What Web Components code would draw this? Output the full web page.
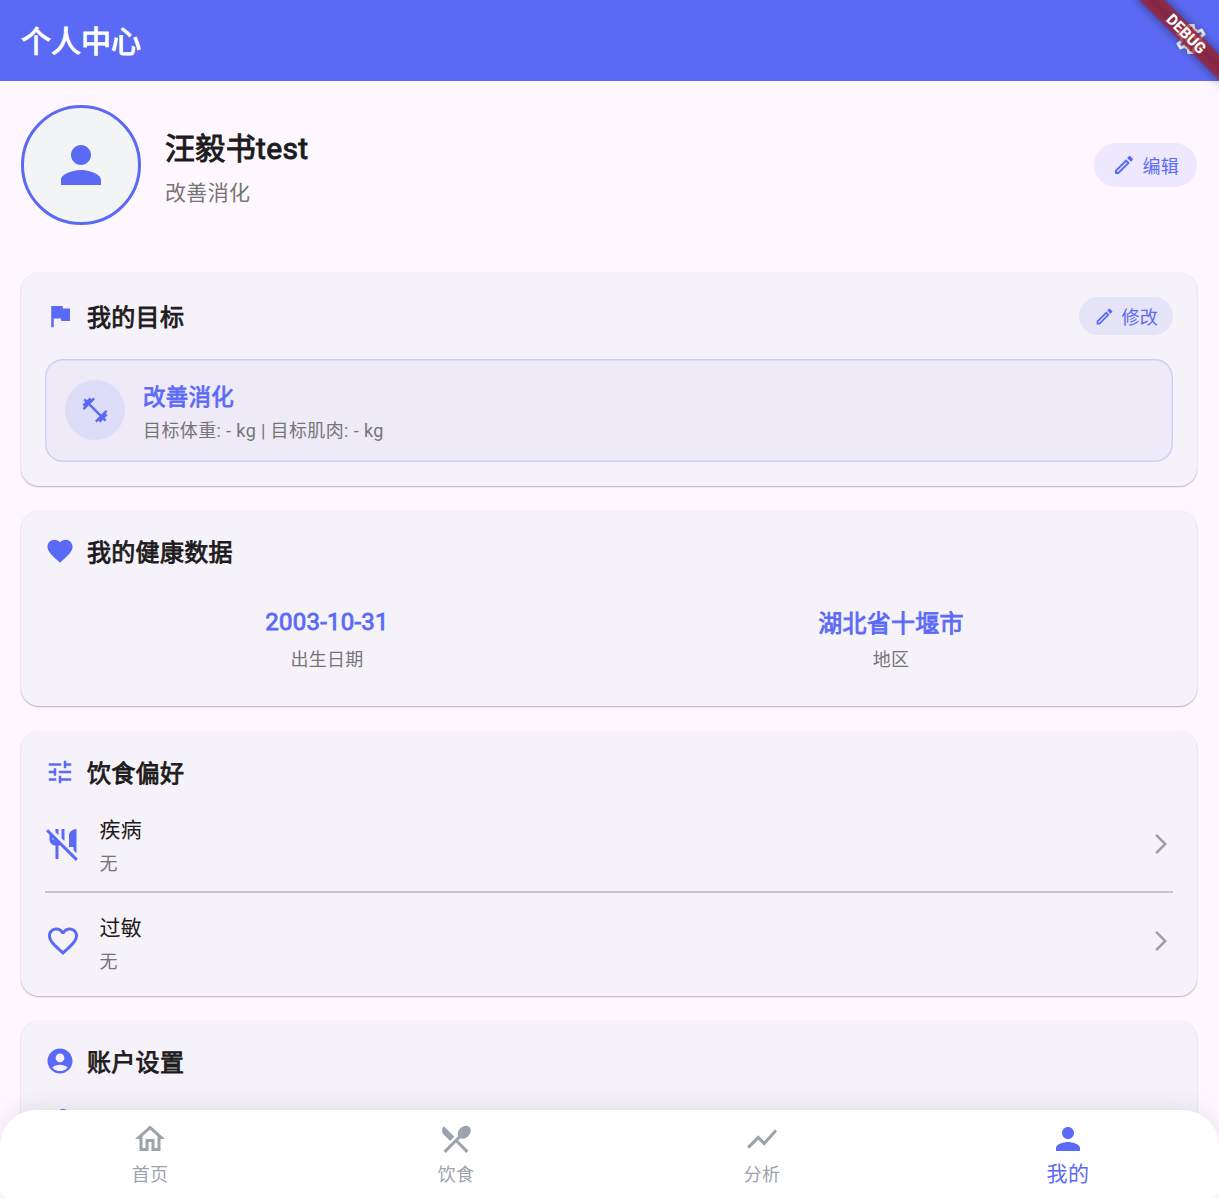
<!DOCTYPE html>
<html lang="zh-CN">
<head>
<meta charset="utf-8">
<title>个人中心</title>
<style>
html,body{margin:0;padding:0;height:100%;overflow:hidden;background:#fef7ff}
body{font-family:Roboto,"Noto Sans CJK SC",sans-serif;color:#1d1b20;--primary:#5b6af5}
</style>
</head>
<body>
<profile-app></profile-app>
<script>
const ICONS = {
  person:'M12 12c2.21 0 4-1.79 4-4s-1.79-4-4-4-4 1.79-4 4 1.79 4 4 4zm0 2c-2.67 0-8 1.34-8 4v2h16v-2c0-2.66-5.33-4-8-4z',
  flag:'M14.4 6L14 4H5v17h2v-7h5.6l.4 2h7V6z',
  edit:'M14.06 9.02l.92.92L5.92 19H5v-.92l9.06-9.06M17.66 3c-.25 0-.51.1-.7.29l-1.83 1.83 3.75 3.75 1.83-1.83c.39-.39.39-1.02 0-1.41l-2.34-2.34c-.2-.2-.45-.29-.71-.29zm-3.6 3.19L3 17.25V21h3.75L17.81 9.94l-3.75-3.75z',
  fitness:'M20.57 14.86L22 13.43 20.57 12 17 15.57 8.43 7 12 3.43 10.57 2 9.14 3.43 7.71 2 5.57 4.14 4.14 2.71 2.71 4.14l1.43 1.43L2 7.71l1.43 1.43L2 10.57 3.43 12 7 8.43 15.57 17 12 20.57 13.43 22l1.43-1.43L16.29 22l2.14-2.14 1.43 1.43 1.43-1.43-1.43-1.43L22 16.29z',
  heart:'M12 21.35l-1.45-1.32C5.4 15.36 2 12.28 2 8.5 2 5.42 4.42 3 7.5 3c1.74 0 3.41.81 4.5 2.09C13.09 3.81 14.76 3 16.5 3 19.58 3 22 5.42 22 8.5c0 3.78-3.4 6.86-8.55 11.54L12 21.35z',
  tune:'M3 17v2h6v-2H3zM3 5v2h10V5H3zm10 16v-2h8v-2h-8v-2h-2v6h2zM7 9v2H3v2h4v2h2V9H7zm14 4v-2H11v2h10zm-6-4h2V7h4V5h-4V3h-2v6z',
  nomeals:'M16 14V6c0-1.76 2.24-4 5-4v16.17l-2-2V14h-3zM20.49 23.31L10.02 12.85C9.69 12.94 9.36 13 9 13v9H7v-9c-2.21 0-4-1.79-4-4V5.83L.69 3.51 2.1 2.1l19.8 19.8-1.41 1.41zM6.17 9L5 7.83V9h1.17zM9 2H7v2.17l2 2V2zM13 9V2h-2v6.17l1.85 1.85c.09-.33.15-.66.15-1.02z',
  heartline:'M16.5 3c-1.74 0-3.41.81-4.5 2.09C10.91 3.81 9.24 3 7.5 3 4.42 3 2 5.42 2 8.5c0 3.78 3.4 6.86 8.55 11.54L12 21.35l1.45-1.32C18.6 15.36 22 12.28 22 8.5 22 5.42 19.58 3 16.5 3zm-4.4 15.55l-.1.1-.1-.1C7.14 14.24 4 11.39 4 8.5 4 6.5 5.5 5 7.5 5c1.54 0 3.04.99 3.57 2.36h1.87C13.46 5.99 14.96 5 16.5 5c2 0 3.5 1.5 3.5 3.5 0 2.89-3.14 5.74-7.9 10.05z',
  chevron:'M6.23 20.23L8 22l10-10L8 2 6.23 3.77 14.46 12z',
  account:'M12 2C6.48 2 2 6.48 2 12s4.48 10 10 10 10-4.48 10-10S17.52 2 12 2zm0 4c1.93 0 3.5 1.57 3.5 3.5S13.93 13 12 13s-3.5-1.57-3.5-3.5S10.07 6 12 6zm0 14c-2.03 0-4.43-.82-6.14-2.88C7.55 15.8 9.68 15 12 15s4.45.8 6.14 2.12C16.43 19.18 14.03 20 12 20z',
  home:'M12 5.69l5 4.5V18h-2v-6H9v6H7v-7.81l5-4.5M12 3L2 12h3v8h6v-6h2v6h6v-8h3L12 3z',
  meal:'M8.1 13.34l2.83-2.83L3.91 3.5c-1.56 1.56-1.56 4.09 0 5.66l4.19 4.18zm6.78-1.81c1.53.71 3.68.21 5.27-1.38 1.91-1.91 2.28-4.65.81-6.12-1.46-1.46-4.2-1.1-6.12.81-1.59 1.59-2.09 3.74-1.38 5.27L3.7 19.87l1.41 1.41L12 14.41l6.88 6.88 1.41-1.41L13.41 13l1.47-1.47z',
  chart:'M3.5 18.49l6-6.01 4 4L22 6.92l-1.41-1.41-7.09 7.97-4-4L2 16.99z',
  settings:'M19.43 12.98c.04-.32.07-.64.07-.98 0-.34-.03-.66-.07-.98l2.11-1.65c.19-.15.24-.42.12-.64l-2-3.46c-.09-.16-.26-.25-.44-.25-.06 0-.12.01-.17.03l-2.49 1c-.52-.4-1.08-.73-1.69-.98l-.38-2.65C14.46 2.18 14.25 2 14 2h-4c-.25 0-.46.18-.49.42l-.38 2.65c-.61.25-1.17.59-1.69.98l-2.49-1c-.06-.02-.12-.03-.18-.03-.17 0-.34.09-.43.25l-2 3.46c-.13.22-.07.49.12.64l2.11 1.65c-.04.32-.07.65-.07.98 0 .33.03.66.07.98l-2.11 1.65c-.19.15-.24.42-.12.64l2 3.46c.09.16.26.25.44.25.06 0 .12-.01.17-.03l2.49-1c.52.4 1.08.73 1.69.98l.38 2.65c.03.24.24.42.49.42h4c.25 0 .46-.18.49-.42l.38-2.65c.61-.25 1.17-.59 1.69-.98l2.49 1c.06.02.12.03.18.03.17 0 .34-.09.43-.25l2-3.46c.12-.22.07-.49-.12-.64l-2.11-1.65zm-1.98-1.71c.04.31.05.52.05.73 0 .21-.02.43-.05.73l-.14 1.13.89.7 1.08.84-.7 1.21-1.27-.51-1.04-.42-.9.68c-.43.32-.84.56-1.25.73l-1.06.43-.16 1.13-.2 1.35h-1.4l-.19-1.35-.16-1.13-1.06-.43c-.43-.18-.83-.41-1.23-.71l-.91-.7-1.06.43-1.27.51-.7-1.21 1.08-.84.89-.7-.14-1.13c-.03-.31-.05-.54-.05-.74s.02-.43.05-.73l.14-1.13-.89-.7-1.08-.84.7-1.21 1.27.51 1.04.42.9-.68c.43-.32.84-.56 1.25-.73l1.06-.43.16-1.13.2-1.35h1.39l.19 1.35.16 1.13 1.06.43c.43.18.83.41 1.23.71l.91.7 1.06-.43 1.27-.51.7 1.21-1.07.85-.89.7.14 1.13zM12 8c-2.21 0-4 1.79-4 4s1.79 4 4 4 4-1.79 4-4-1.79-4-4-4zm0 6c-1.1 0-2-.9-2-2s.9-2 2-2 2 .9 2 2-.9 2-2 2z'
};

function define(name, html) {
  customElements.define(name, class extends HTMLElement {
    connectedCallback() {
      if (this.shadowRoot) return;
      const root = this.attachShadow({mode:'open'});
      root.innerHTML = typeof html === 'function' ? html(this) : html;
    }
  });
}

define('m-icon', el => `<style>
:host{display:block;flex:none;width:${el.getAttribute('size')}px;height:${el.getAttribute('size')}px}
svg{display:block;width:100%;height:100%;fill:currentColor}
</style><svg viewBox="0 0 24 24" aria-hidden="true"><path d="${ICONS[el.getAttribute('name')]}"/></svg>`);

define('app-header', `<style>
:host{display:flex;flex:none;box-sizing:border-box;height:81px;padding:0 10px 0 21px;align-items:center;justify-content:space-between;background:var(--primary);color:#fff}
h1{margin:2px 0 0;font-size:30px;line-height:40px;font-weight:400;-webkit-text-stroke:1.05px currentColor}
m-icon{margin-bottom:3px}
</style><h1><slot></slot></h1><m-icon name="settings" size="36"></m-icon>`);

define('debug-banner', `<style>
:host{position:absolute;right:0;top:0;width:110px;height:110px;overflow:hidden;pointer-events:none}
.band{position:absolute;left:16.5px;top:24.5px;width:120px;height:18px;transform:rotate(45deg)}
.shade,.fill{position:absolute;inset:0}
.shade{background:rgba(0,0,0,.5);filter:blur(5.5px)}
.fill{background:rgba(183,28,28,.627);color:#fff;font-size:15.3px;line-height:18px;font-weight:800;text-align:center}
</style><div class="band"><div class="shade"></div><div class="fill">DEBUG</div></div>`);

define('pill-button', el => {
  const small = el.hasAttribute('small');
  return `<style>
:host{display:flex;flex:none;box-sizing:border-box;align-items:center;color:var(--primary);font-size:18px;line-height:24px;letter-spacing:.2px;
background:rgba(91,106,245,.1);
height:${small ? 37.5 : 43.5}px;border-radius:22px;padding:${small ? '0 15px' : '0 18px'};gap:7px}
span{padding-top:3px}
</style><m-icon name="edit" size="${small ? 21 : 24}"></m-icon><span><slot></slot></span>`;
});

define('profile-summary', `<style>
:host{display:flex;flex:none;align-items:center;height:120px;padding:24px 0 48px}
.avatar{box-sizing:border-box;width:120px;height:120px;border:3px solid var(--primary);border-radius:50%;background:#f3f4f6;color:var(--primary);display:flex;align-items:center;justify-content:center}
.who{flex:1;margin-left:24px;padding-top:5px}
.name{font-size:30px;line-height:42px;font-weight:400;-webkit-text-stroke:1px currentColor;letter-spacing:.35px}
.goal{font-size:21px;line-height:30px;letter-spacing:.37px;color:#757575;margin-top:8px}
</style><div class="avatar"><m-icon name="person" size="60"></m-icon></div>
<div class="who"><div class="name"><slot name="name"></slot></div><div class="goal"><slot name="goal"></slot></div></div>
<pill-button>编辑</pill-button>`);

define('section-card', el => `<style>
:host{display:block;flex:none;box-sizing:border-box;padding:24px;border-radius:18px;background:#f6f2f9;box-shadow:0 1px 1.5px rgba(0,0,0,.27),0 0 2px rgba(0,0,0,.06)}
header{display:flex;align-items:center;height:var(--head,32px);gap:12px}
m-icon{color:var(--primary)}
h2{flex:1;margin:0;padding-top:4px;font-size:24px;line-height:34px;font-weight:400;-webkit-text-stroke:.85px currentColor;letter-spacing:.3px}
</style><header><m-icon name="${el.getAttribute('icon')}" size="30"></m-icon><h2>${el.getAttribute('heading')}</h2><slot name="action"></slot></header><slot></slot>`);

define('goal-box', `<style>
:host{display:flex;box-sizing:border-box;height:102.5px;align-items:center;gap:18.5px;padding:0 19.5px;box-shadow:inset 0 0 0 1.5px rgba(91,106,245,.2);border-radius:18px;background:rgba(91,106,245,.05)}
.badge{display:flex;align-items:center;justify-content:center;width:60px;height:60px;border-radius:50%;background:rgba(91,106,245,.1);color:var(--primary)}
.txt{padding-top:4px}
.t{font-size:22.5px;line-height:32px;font-weight:400;-webkit-text-stroke:.8px currentColor;letter-spacing:.25px;color:var(--primary)}
.s{font-size:18px;line-height:26px;letter-spacing:.38px;color:#757575;margin-top:5.5px}
</style><div class="badge"><m-icon name="fitness" size="30"></m-icon></div>
<div class="txt"><div class="t"><slot name="title"></slot></div><div class="s"><slot></slot></div></div>`);

define('health-stat', el => `<style>
:host{display:flex;flex:1;flex-direction:column;align-items:center}
.v{box-sizing:border-box;height:36px;padding-top:${el.hasAttribute('latin') ? 0 : 2}px;font-size:24px;line-height:34px;font-weight:400;-webkit-text-stroke:.85px currentColor;letter-spacing:.225px;color:var(--primary)}
.l{font-size:18px;line-height:26px;letter-spacing:.2px;color:#757575;margin-top:6px}
</style><div class="v"><slot></slot></div><div class="l"><slot name="label"></slot></div>`);

define('pref-row', `<style>
:host{display:flex;align-items:center;gap:18.5px;height:60px}
m-icon{color:var(--primary)}
.txt{flex:1;padding-top:var(--drop,5px)}
.t{font-size:21px;line-height:30px;letter-spacing:.3px;color:#1d1b20}
.s{font-size:18px;line-height:26px;letter-spacing:.3px;color:#757575;margin-top:6px}
.go{color:#9e9e9e}
</style><slot name="icon"></slot><div class="txt"><div class="t"><slot></slot></div><div class="s"><slot name="value"></slot></div></div><m-icon class="go" name="chevron" size="24"></m-icon>`);

define('nav-item', el => {
  const on = el.hasAttribute('active');
  return `<style>
:host{display:flex;flex:none;width:306px;flex-direction:column;align-items:center;color:${on ? 'var(--primary)' : '#9ca3af'};font-size:${on ? 21 : 18}px;letter-spacing:${on ? .4 : .2}px}
span{line-height:30px;margin-top:${on ? 2 : 3}px}
</style><m-icon name="${el.getAttribute('icon')}" size="36"></m-icon><span><slot></slot></span>`;
});

define('bottom-nav', `<style>
:host{position:absolute;left:0;right:0;bottom:0;height:88px;box-sizing:border-box;padding:11px 1px 0 0;display:flex;justify-content:center;background:#fff;border-radius:36px 36px 9px 9px;box-shadow:0 -4px 22px rgba(0,0,0,.08)}
</style>
<nav-item icon="home">首页</nav-item><nav-item icon="meal">饮食</nav-item><nav-item icon="chart">分析</nav-item><nav-item icon="person" active>我的</nav-item>`);

define('profile-app', `<style>
:host{position:relative;display:flex;flex-direction:column;height:100vh;overflow:hidden;background:#fef7ff}
main{display:flex;flex-direction:column;flex:1;min-height:0;padding:0 22px 0 21px;overflow:hidden}
.c1{height:213px;--head:38px}.c2{height:195px;margin-top:25px}.c3{height:265px;margin-top:25px;--head:33px}.c4{height:400px;margin-top:25px}
.c1 goal-box{margin-top:24px}
.stats{display:flex;margin-top:38px}
.p1{margin-top:26px;--drop:3px}
.p2{--drop:7px}
hr{margin:17px 0 18px;border:0;height:1.5px;background:#cac4d0}
.lead{color:var(--primary)}
.p3{margin-top:26px}
</style>
<app-header>个人中心</app-header>
<main>
<profile-summary><span slot="name">汪毅书test</span><span slot="goal">改善消化</span></profile-summary>
<section-card class="c1" icon="flag" heading="我的目标"><pill-button slot="action" small>修改</pill-button>
<goal-box><span slot="title">改善消化</span>目标体重: - kg | 目标肌肉: - kg</goal-box></section-card>
<section-card class="c2" icon="heart" heading="我的健康数据"><div class="stats">
<health-stat latin>2003-10-31<span slot="label">出生日期</span></health-stat>
<health-stat>湖北省十堰市<span slot="label">地区</span></health-stat></div></section-card>
<section-card class="c3" icon="tune" heading="饮食偏好">
<pref-row class="p1"><m-icon class="lead" slot="icon" name="nomeals" size="36"></m-icon>疾病<span slot="value">无</span></pref-row>
<hr>
<pref-row class="p2"><m-icon class="lead" slot="icon" name="heartline" size="36"></m-icon>过敏<span slot="value">无</span></pref-row></section-card>
<section-card class="c4" icon="account" heading="账户设置"><m-icon class="lead p3" name="person" size="36"></m-icon></section-card>
</main>
<bottom-nav></bottom-nav>
<debug-banner></debug-banner>`);
</script>
</body>
</html>
